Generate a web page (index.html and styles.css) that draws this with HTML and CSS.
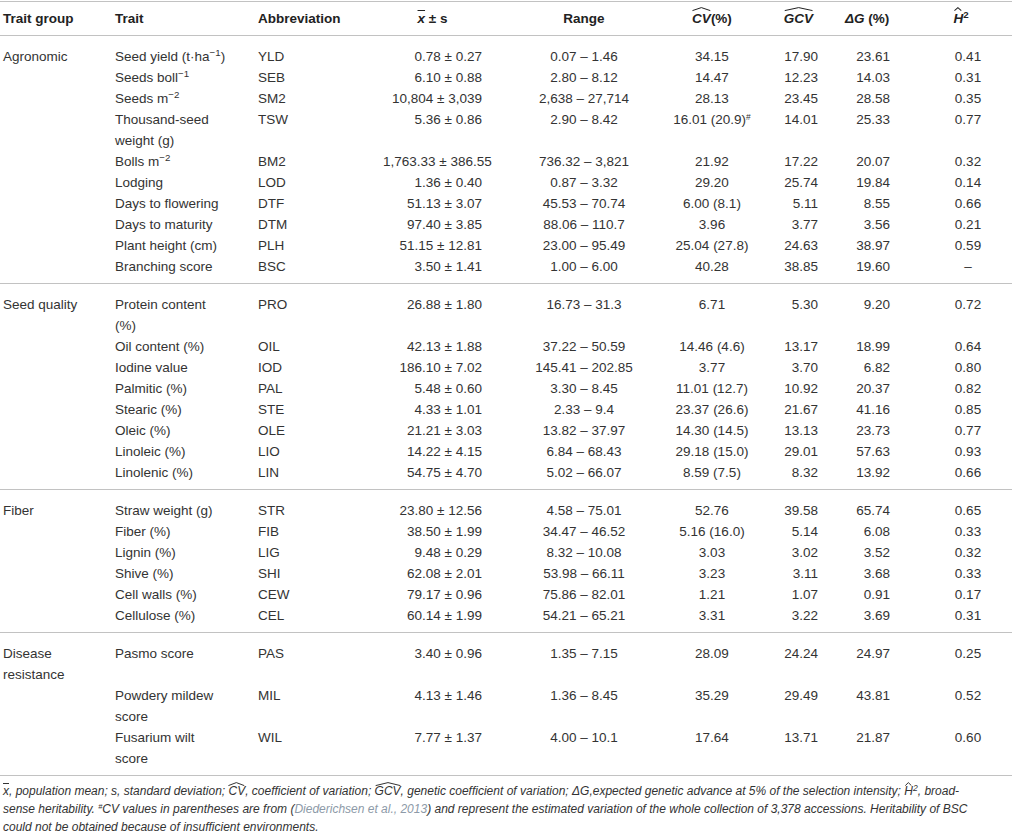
FILE: index.html
```html
<!DOCTYPE html>
<html lang="en">
<head>
    <meta charset="UTF-8">
    <meta name="viewport" content="width=device-width, initial-scale=1.0">
    <title>Trait statistics</title>
    <link rel="stylesheet" href="styles.css">
</head>
<body>
    <table class="traits">
        <colgroup>
            <col class="w-group">
            <col class="w-trait">
            <col class="w-abbr">
            <col class="w-mean">
            <col class="w-range">
            <col class="w-cv">
            <col class="w-gcv">
            <col class="w-dg">
            <col class="w-h2">
        </colgroup>
        <thead>
            <tr>
                <th>Trait group</th>
                <th>Trait</th>
                <th>Abbreviation</th>
                <th class="c-mean"><i class="bar">x</i> ± s</th>
                <th class="c-range">Range</th>
                <th class="c-cv"><i class="hat">CV<svg viewBox="0 0 20 4" preserveAspectRatio="none"><polyline points="0.5,3.6 10,0.6 19.5,3.6"/></svg></i>(%)</th>
                <th class="c-gcv"><i class="hat">GCV<svg viewBox="0 0 20 4" preserveAspectRatio="none"><polyline points="0.5,3.6 10,0.6 19.5,3.6"/></svg></i></th>
                <th class="c-dg"><i>Δ</i><i>G</i> (%)</th>
                <th class="c-h2"><i class="hat">H<svg viewBox="0 0 20 4" preserveAspectRatio="none"><polyline points="3,3.6 10,0.6 17,3.6"/></svg></i><sup>2</sup></th>
            </tr>
        </thead>

        <!-- Agronomic -->
        <tbody>
            <tr><td>Agronomic</td><td>Seed yield (t·ha<sup>−1</sup>)</td><td>YLD</td><td class="c-mean">0.78 ± 0.27</td><td class="c-range">0.07 – 1.46</td><td class="c-cv">34.15</td><td class="c-gcv">17.90</td><td class="c-dg">23.61</td><td class="c-h2">0.41</td></tr>
            <tr><td></td><td>Seeds boll<sup>−1</sup></td><td>SEB</td><td class="c-mean">6.10 ± 0.88</td><td class="c-range">2.80 – 8.12</td><td class="c-cv">14.47</td><td class="c-gcv">12.23</td><td class="c-dg">14.03</td><td class="c-h2">0.31</td></tr>
            <tr><td></td><td>Seeds m<sup>−2</sup></td><td>SM2</td><td class="c-mean">10,804 ± 3,039</td><td class="c-range">2,638 – 27,714</td><td class="c-cv">28.13</td><td class="c-gcv">23.45</td><td class="c-dg">28.58</td><td class="c-h2">0.35</td></tr>
            <tr><td></td><td>Thousand-seed<br>weight (g)</td><td>TSW</td><td class="c-mean">5.36 ± 0.86</td><td class="c-range">2.90 – 8.42</td><td class="c-cv">16.01 (20.9)<sup class="mark">#</sup></td><td class="c-gcv">14.01</td><td class="c-dg">25.33</td><td class="c-h2">0.77</td></tr>
            <tr><td></td><td>Bolls m<sup>−2</sup></td><td>BM2</td><td class="c-mean">1,763.33 ± 386.55</td><td class="c-range">736.32 – 3,821</td><td class="c-cv">21.92</td><td class="c-gcv">17.22</td><td class="c-dg">20.07</td><td class="c-h2">0.32</td></tr>
            <tr><td></td><td>Lodging</td><td>LOD</td><td class="c-mean">1.36 ± 0.40</td><td class="c-range">0.87 – 3.32</td><td class="c-cv">29.20</td><td class="c-gcv">25.74</td><td class="c-dg">19.84</td><td class="c-h2">0.14</td></tr>
            <tr><td></td><td>Days to flowering</td><td>DTF</td><td class="c-mean">51.13 ± 3.07</td><td class="c-range">45.53 – 70.74</td><td class="c-cv">6.00 (8.1)</td><td class="c-gcv">5.11</td><td class="c-dg">8.55</td><td class="c-h2">0.66</td></tr>
            <tr><td></td><td>Days to maturity</td><td>DTM</td><td class="c-mean">97.40 ± 3.85</td><td class="c-range">88.06 – 110.7</td><td class="c-cv">3.96</td><td class="c-gcv">3.77</td><td class="c-dg">3.56</td><td class="c-h2">0.21</td></tr>
            <tr><td></td><td>Plant height (cm)</td><td>PLH</td><td class="c-mean">51.15 ± 12.81</td><td class="c-range">23.00 – 95.49</td><td class="c-cv">25.04 (27.8)</td><td class="c-gcv">24.63</td><td class="c-dg">38.97</td><td class="c-h2">0.59</td></tr>
            <tr><td></td><td>Branching score</td><td>BSC</td><td class="c-mean">3.50 ± 1.41</td><td class="c-range">1.00 – 6.00</td><td class="c-cv">40.28</td><td class="c-gcv">38.85</td><td class="c-dg">19.60</td><td class="c-h2">–</td></tr>
        </tbody>

        <!-- Seed quality -->
        <tbody>
            <tr><td>Seed quality</td><td>Protein content<br>(%)</td><td>PRO</td><td class="c-mean">26.88 ± 1.80</td><td class="c-range">16.73 – 31.3</td><td class="c-cv">6.71</td><td class="c-gcv">5.30</td><td class="c-dg">9.20</td><td class="c-h2">0.72</td></tr>
            <tr><td></td><td>Oil content (%)</td><td>OIL</td><td class="c-mean">42.13 ± 1.88</td><td class="c-range">37.22 – 50.59</td><td class="c-cv">14.46 (4.6)</td><td class="c-gcv">13.17</td><td class="c-dg">18.99</td><td class="c-h2">0.64</td></tr>
            <tr><td></td><td>Iodine value</td><td>IOD</td><td class="c-mean">186.10 ± 7.02</td><td class="c-range">145.41 – 202.85</td><td class="c-cv">3.77</td><td class="c-gcv">3.70</td><td class="c-dg">6.82</td><td class="c-h2">0.80</td></tr>
            <tr><td></td><td>Palmitic (%)</td><td>PAL</td><td class="c-mean">5.48 ± 0.60</td><td class="c-range">3.30 – 8.45</td><td class="c-cv">11.01 (12.7)</td><td class="c-gcv">10.92</td><td class="c-dg">20.37</td><td class="c-h2">0.82</td></tr>
            <tr><td></td><td>Stearic (%)</td><td>STE</td><td class="c-mean">4.33 ± 1.01</td><td class="c-range">2.33 – 9.4</td><td class="c-cv">23.37 (26.6)</td><td class="c-gcv">21.67</td><td class="c-dg">41.16</td><td class="c-h2">0.85</td></tr>
            <tr><td></td><td>Oleic (%)</td><td>OLE</td><td class="c-mean">21.21 ± 3.03</td><td class="c-range">13.82 – 37.97</td><td class="c-cv">14.30 (14.5)</td><td class="c-gcv">13.13</td><td class="c-dg">23.73</td><td class="c-h2">0.77</td></tr>
            <tr><td></td><td>Linoleic (%)</td><td>LIO</td><td class="c-mean">14.22 ± 4.15</td><td class="c-range">6.84 – 68.43</td><td class="c-cv">29.18 (15.0)</td><td class="c-gcv">29.01</td><td class="c-dg">57.63</td><td class="c-h2">0.93</td></tr>
            <tr><td></td><td>Linolenic (%)</td><td>LIN</td><td class="c-mean">54.75 ± 4.70</td><td class="c-range">5.02 – 66.07</td><td class="c-cv">8.59 (7.5)</td><td class="c-gcv">8.32</td><td class="c-dg">13.92</td><td class="c-h2">0.66</td></tr>
        </tbody>

        <!-- Fiber -->
        <tbody>
            <tr><td>Fiber</td><td>Straw weight (g)</td><td>STR</td><td class="c-mean">23.80 ± 12.56</td><td class="c-range">4.58 – 75.01</td><td class="c-cv">52.76</td><td class="c-gcv">39.58</td><td class="c-dg">65.74</td><td class="c-h2">0.65</td></tr>
            <tr><td></td><td>Fiber (%)</td><td>FIB</td><td class="c-mean">38.50 ± 1.99</td><td class="c-range">34.47 – 46.52</td><td class="c-cv">5.16 (16.0)</td><td class="c-gcv">5.14</td><td class="c-dg">6.08</td><td class="c-h2">0.33</td></tr>
            <tr><td></td><td>Lignin (%)</td><td>LIG</td><td class="c-mean">9.48 ± 0.29</td><td class="c-range">8.32 – 10.08</td><td class="c-cv">3.03</td><td class="c-gcv">3.02</td><td class="c-dg">3.52</td><td class="c-h2">0.32</td></tr>
            <tr><td></td><td>Shive (%)</td><td>SHI</td><td class="c-mean">62.08 ± 2.01</td><td class="c-range">53.98 – 66.11</td><td class="c-cv">3.23</td><td class="c-gcv">3.11</td><td class="c-dg">3.68</td><td class="c-h2">0.33</td></tr>
            <tr><td></td><td>Cell walls (%)</td><td>CEW</td><td class="c-mean">79.17 ± 0.96</td><td class="c-range">75.86 – 82.01</td><td class="c-cv">1.21</td><td class="c-gcv">1.07</td><td class="c-dg">0.91</td><td class="c-h2">0.17</td></tr>
            <tr><td></td><td>Cellulose (%)</td><td>CEL</td><td class="c-mean">60.14 ± 1.99</td><td class="c-range">54.21 – 65.21</td><td class="c-cv">3.31</td><td class="c-gcv">3.22</td><td class="c-dg">3.69</td><td class="c-h2">0.31</td></tr>
        </tbody>

        <!-- Disease resistance -->
        <tbody>
            <tr><td>Disease<br>resistance</td><td>Pasmo score</td><td>PAS</td><td class="c-mean">3.40 ± 0.96</td><td class="c-range">1.35 – 7.15</td><td class="c-cv">28.09</td><td class="c-gcv">24.24</td><td class="c-dg">24.97</td><td class="c-h2">0.25</td></tr>
            <tr><td></td><td>Powdery mildew<br>score</td><td>MIL</td><td class="c-mean">4.13 ± 1.46</td><td class="c-range">1.36 – 8.45</td><td class="c-cv">35.29</td><td class="c-gcv">29.49</td><td class="c-dg">43.81</td><td class="c-h2">0.52</td></tr>
            <tr><td></td><td>Fusarium wilt<br>score</td><td>WIL</td><td class="c-mean">7.77 ± 1.37</td><td class="c-range">4.00 – 10.1</td><td class="c-cv">17.64</td><td class="c-gcv">13.71</td><td class="c-dg">21.87</td><td class="c-h2">0.60</td></tr>
        </tbody>
    </table>

    <p class="note">
        <span class="bar">x</span>, population mean; s, standard deviation; <span class="hat">CV<svg viewBox="0 0 20 4" preserveAspectRatio="none"><polyline points="0.5,3.6 10,0.6 19.5,3.6"/></svg></span>, coefficient of variation; <span class="hat">GCV<svg viewBox="0 0 20 4" preserveAspectRatio="none"><polyline points="0.5,3.6 10,0.6 19.5,3.6"/></svg></span>, genetic coefficient of variation; ΔG,expected genetic advance at 5% of the selection intensity; <span class="hat">H<svg viewBox="0 0 20 4" preserveAspectRatio="none"><polyline points="3,3.6 10,0.6 17,3.6"/></svg></span><sup>2</sup>, broad-<br>sense heritability. <sup class="mark">#</sup>CV values in parentheses are from (<a class="ref" href="#ref">Diederichsen et al., 2013</a>) and represent the estimated variation of the whole collection of 3,378 accessions. Heritability of BSC<br>could not be obtained because of insufficient environments.
    </p>
</body>
</html>
```

FILE: styles.css
```css
/* Basic reset */
* {
    margin: 0;
    padding: 0;
    box-sizing: border-box;
}

body {
    font-family: "Liberation Sans", Arial, sans-serif;
    color: #333;
    background-color: #fff;
}

/* Table */
.traits {
    width: 1012px;
    margin-top: 1px;
    border-collapse: collapse;
    table-layout: fixed;
    border-top: 1px solid #c2c2c2;
    border-bottom: 1px solid #c2c2c2;
    font-size: 13.5px;
    line-height: 21px;
}

.w-group { width: 112px; }
.w-trait { width: 143px; }
.w-abbr  { width: 125px; }
.w-mean  { width: 140px; }
.w-range { width: 128px; }
.w-cv    { width: 128px; }
.w-gcv   { width: 45px; }
.w-dg    { width: 72px; }
.w-h2    { width: 119px; }

.traits th,
.traits td {
    padding: 0 3px;
    text-align: left;
    vertical-align: top;
    white-space: nowrap;
}

.traits th {
    padding-top: 6px;
    padding-bottom: 6px;
    font-weight: bold;
    color: #222;
}

.traits thead {
    border-bottom: 1px solid #c2c2c2;
}

.traits tbody {
    border-top: 1px solid #c2c2c2;
}

.traits tbody tr:first-child td {
    padding-top: 10px;
}

.traits tbody tr:last-child td {
    padding-bottom: 6px;
}

/* Column alignment */
.traits .c-mean {
    text-align: right;
    padding-right: 38px;
}

.traits th.c-mean {
    text-align: center;
}

.traits .c-range,
.traits .c-cv {
    text-align: center;
}

.traits .c-gcv,
.traits .c-dg {
    text-align: right;
}

.traits th.c-gcv {
    text-align: center;
}

.traits th.c-dg {
    text-align: left;
    padding-left: 24px;
}

.traits .c-h2 {
    text-align: center;
    padding-left: 34px;
}

.traits th.c-h2 {
    padding-left: 20px;
}

/* Math marks */
sup {
    font-size: 72%;
    line-height: 0;
    vertical-align: 0.5em;
}

sup.mark {
    font-size: 62%;
}

.bar {
    font-style: italic;
    text-decoration: overline;
    text-decoration-thickness: 1px;
}

.hat {
    position: relative;
    display: inline-block;
    font-style: italic;
}

.hat svg {
    position: absolute;
    left: 0;
    top: -1px;
    width: 100%;
    height: 4px;
    overflow: visible;
}

.hat polyline {
    fill: none;
    stroke: currentColor;
    stroke-width: 1;
    vector-effect: non-scaling-stroke;
}

/* Footnote */
.note {
    padding: 6px 3px 0;
    font-size: 12px;
    line-height: 18px;
    font-style: italic;
    color: #333;
    white-space: nowrap;
}

.note .hat {
    line-height: 14px;
}

.note .hat svg {
    top: -2px;
}

.ref {
    color: #8d9aa8;
    text-decoration: none;
}
```
